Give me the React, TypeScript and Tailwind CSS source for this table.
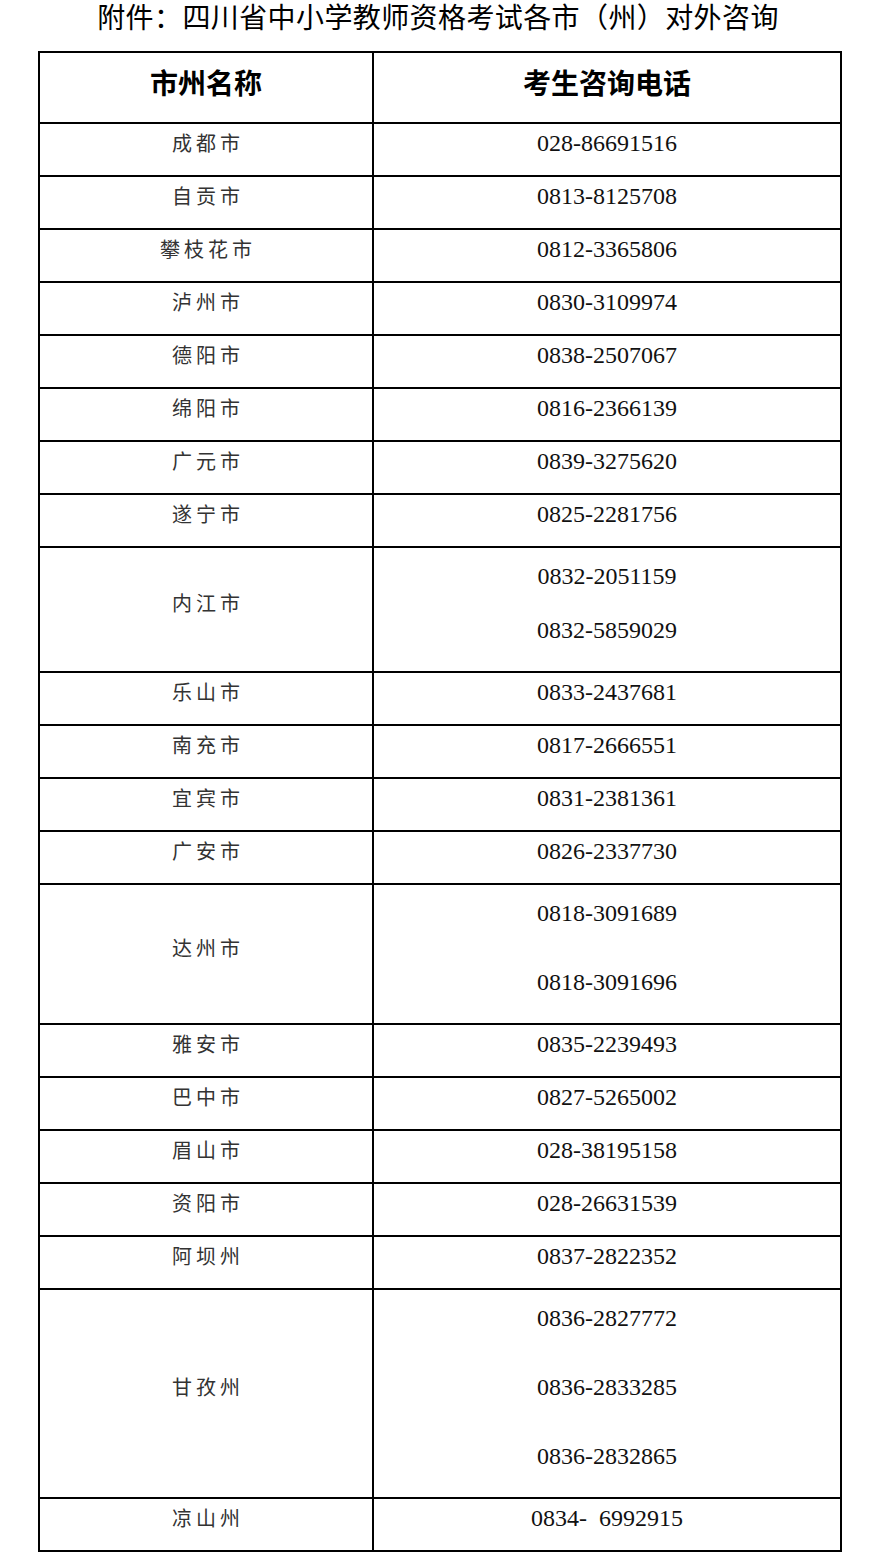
const rows: { name: string; phones: string[]; h: string; lh?: string }[] = [
  { name: "成都市", phones: ["028-86691516"], h: "h-[53px]" },
  { name: "自贡市", phones: ["0813-8125708"], h: "h-[53px]" },
  { name: "攀枝花市", phones: ["0812-3365806"], h: "h-[53px]" },
  { name: "泸州市", phones: ["0830-3109974"], h: "h-[53px]" },
  { name: "德阳市", phones: ["0838-2507067"], h: "h-[53px]" },
  { name: "绵阳市", phones: ["0816-2366139"], h: "h-[53px]" },
  { name: "广元市", phones: ["0839-3275620"], h: "h-[53px]" },
  { name: "遂宁市", phones: ["0825-2281756"], h: "h-[53px]" },
  { name: "内江市", phones: ["0832-2051159", "0832-5859029"], h: "h-[125px]", lh: "leading-[54px]" },
  { name: "乐山市", phones: ["0833-2437681"], h: "h-[53px]" },
  { name: "南充市", phones: ["0817-2666551"], h: "h-[53px]" },
  { name: "宜宾市", phones: ["0831-2381361"], h: "h-[53px]" },
  { name: "广安市", phones: ["0826-2337730"], h: "h-[53px]" },
  { name: "达州市", phones: ["0818-3091689", "0818-3091696"], h: "h-[140px]", lh: "leading-[69px]" },
  { name: "雅安市", phones: ["0835-2239493"], h: "h-[53px]" },
  { name: "巴中市", phones: ["0827-5265002"], h: "h-[53px]" },
  { name: "眉山市", phones: ["028-38195158"], h: "h-[53px]" },
  { name: "资阳市", phones: ["028-26631539"], h: "h-[53px]" },
  { name: "阿坝州", phones: ["0837-2822352"], h: "h-[53px]" },
  { name: "甘孜州", phones: ["0836-2827772", "0836-2833285", "0836-2832865"], h: "h-[209px]", lh: "leading-[69px]" },
  { name: "凉山州", phones: ["0834-  6992915"], h: "h-[53px]" },
]

const sans = "font-['Noto_Sans_CJK_SC','Noto_Sans',sans-serif]"

export default function App() {
  return (
    <div className="min-h-[1567px] w-[876px] bg-white pb-[15px]">
      {/* title */}
      <h1 className={`${sans} h-[51px] text-center text-[28px] leading-[32px] tracking-[0.4px] text-black`}>
        附件：四川省中小学教师资格考试各市（州）对外咨询
      </h1>

      <div className="ml-[38px] w-[804px] border-x-2 border-b-2 border-black">
        {/* header */}
        <div className="flex h-[71px] border-t-2 border-black">
          <div className={`${sans} flex w-[332px] items-center justify-center pb-[11px] text-[28px] font-bold text-black`}>
            市州名称
          </div>
          <div className={`${sans} flex flex-1 items-center justify-center border-l-2 border-black pb-[11px] text-[28px] font-bold text-black`}>
            考生咨询电话
          </div>
        </div>

        {rows.map((r) => (
          <div key={r.name} className={`flex border-t-2 border-black ${r.h}`}>
            <div className="flex w-[332px] items-center justify-center pb-[13px]">
              <span className={`${sans} pl-[4px] text-[20px] leading-[24px] tracking-[4px] text-[#333]`}>{r.name}</span>
            </div>
            <div className="flex flex-1 flex-col items-center justify-center border-l-2 border-black pb-[13px]">
              {r.phones.map((p) => (
                <div
                  key={p}
                  className={`font-['Liberation_Serif',serif] whitespace-pre text-[24px] text-[#111] ${r.lh ?? "leading-[24px]"}`}
                >
                  {p}
                </div>
              ))}
            </div>
          </div>
        ))}
      </div>
    </div>
  )
}
